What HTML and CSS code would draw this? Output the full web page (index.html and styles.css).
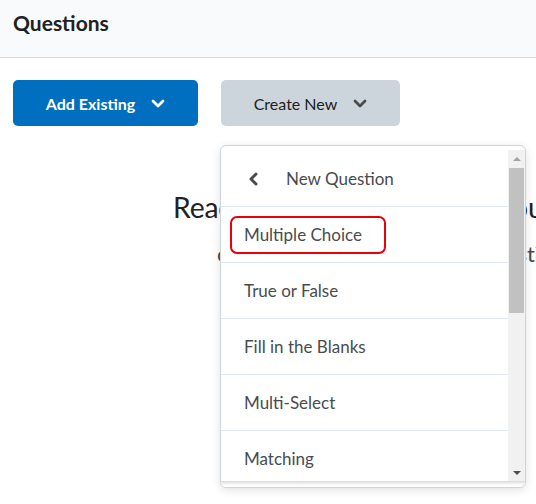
FILE: index.html
```html
<!DOCTYPE html>
<html>
<head>
<meta charset="utf-8">
<link rel="stylesheet" href="styles.css">
</head>
<body>
<header class="page-header">
  <h1 class="page-title">Questions</h1>
</header>
<div class="toolbar">
  <button class="btn btn-primary">
    <span>Add Existing</span>
    <svg class="chev-down" width="14" height="9" viewBox="0 0 14 9"><polyline points="2,2 7,7 12,2" fill="none" stroke="#fff" stroke-width="2.8" stroke-linecap="round" stroke-linejoin="round"/></svg>
  </button>
  <button class="btn btn-secondary">
    <span>Create New</span>
    <svg class="chev-down" width="14" height="9" viewBox="0 0 14 9"><polyline points="2,2 7,7 12,2" fill="none" stroke="#494c4e" stroke-width="2.8" stroke-linecap="round" stroke-linejoin="round"/></svg>
  </button>
</div>
<main class="empty-state">
  <h2 class="empty-title">Ready to add questions to your quiz?</h2>
  <p class="empty-text">create new questions or add existing ones to get started</p>
</main>

<div class="menu">
  <div class="menu-body">
    <div class="menu-list">
      <div class="menu-head">
        <svg class="chev-left" width="10" height="14" viewBox="0 0 10 14"><polyline points="8,2 3,7 8,12" fill="none" stroke="#494c4e" stroke-width="3" stroke-linecap="round" stroke-linejoin="round"/></svg>
        <span class="menu-head-label">New Question</span>
      </div>
      <div class="menu-item">
        <span>Multiple Choice</span>
        <span class="highlight"></span>
      </div>
      <div class="menu-item"><span>True or False</span></div>
      <div class="menu-item"><span>Fill in the Blanks</span></div>
      <div class="menu-item"><span>Multi-Select</span></div>
      <div class="menu-item"><span>Matching</span></div>
      <div class="menu-item"><span>Ordering</span></div>
    </div>
    <div class="scrollbar">
      <div class="sb-arrow sb-up"></div>
      <div class="sb-track"><div class="sb-thumb"></div></div>
      <div class="sb-arrow sb-down"></div>
    </div>
  </div>
  <div class="menu-foot"></div>
</div>
</body>
</html>
```
FILE: styles.css
```css
html, body {
  margin: 0;
  padding: 0;
  background: #fff;
}
body {
  font-family: Lato, "Noto Sans", sans-serif;
  color: #494c4e;
  width: 536px;
  height: 504px;
  overflow: hidden;
  position: relative;
}
.page-header {
  height: 57px;
  background: #f9fafc;
  border-bottom: 1px solid #d6dbe3;
  display: flex;
  align-items: flex-start;
}
.page-title {
  margin: 9px 0 0 13px;
  font-size: 21px;
  line-height: 28px;
  font-weight: 700;
  color: #202122;
}
.toolbar {
  display: flex;
  gap: 23px;
  padding: 22px 13px 0 13px;
}
.btn {
  height: 46px;
  border: none;
  border-radius: 5px;
  display: flex;
  align-items: center;
  justify-content: center;
  gap: 16px;
  font-family: Lato, "Noto Sans", sans-serif;
  font-size: 16px;
  padding: 0;
  cursor: pointer;
}
.btn-primary {
  width: 185px;
  background: #006fbf;
  color: #fff;
  font-weight: 700;
}
.btn-secondary {
  width: 179px;
  background: #cdd5dc;
  color: #202122;
  font-weight: 400;
}
.chev-down {
  display: block;
  margin-top: 1px;
}
.empty-state {
  padding: 0 0 0 173px;
  margin-top: 63px;
}
.empty-title {
  margin: 0;
  font-size: 28.3px;
  letter-spacing: -0.15px;
  line-height: 36px;
  font-weight: 400;
  color: #202122;
  white-space: nowrap;
}
.empty-text {
  margin: 15px 0 0 44px;
  font-size: 22px;
  letter-spacing: -0.15px;
  line-height: 28px;
  color: #494c4e;
  white-space: nowrap;
}

/* dropdown menu overlay */
.menu {
  position: absolute;
  left: 220px;
  top: 145px;
  width: 304px;
  background: #fff;
  border: 1px solid #cdd5dc;
  border-radius: 6px;
  box-shadow: 0 2px 10px rgba(0, 0, 0, 0.12);
  padding-top: 4px;
  overflow: hidden;
}
.menu-body {
  display: flex;
  height: 331px;
}
.menu-list {
  flex: 1;
  overflow: hidden;
}
.menu-head {
  height: 56px;
  border-bottom: 1px solid #e3e9f1;
  display: flex;
  align-items: center;
  padding-left: 27px;
}
.chev-left {
  display: block;
  margin-top: 1px;
}
.menu-head-label {
  margin-left: 28px;
  font-size: 17px;
}
.menu-item {
  position: relative;
  height: 55px;
  border-bottom: 1px solid #e3e9f1;
  display: flex;
  align-items: center;
  padding-left: 23px;
  font-size: 17px;
}
.highlight {
  position: absolute;
  left: 9px;
  top: 9px;
  width: 152px;
  height: 34px;
  border: 2px solid #e8000b;
  border-radius: 7px;
}
.scrollbar {
  width: 17px;
  background: #f1f1f1;
  display: flex;
  flex-direction: column;
}
.sb-arrow {
  height: 17px;
  display: flex;
  align-items: center;
  justify-content: center;
}
.sb-up::before {
  content: "";
  border-left: 4px solid transparent;
  border-right: 4px solid transparent;
  border-bottom: 4px solid #a3a3a3;
}
.sb-down::before {
  content: "";
  border-left: 4px solid transparent;
  border-right: 4px solid transparent;
  border-top: 4px solid #505050;
}
.sb-track {
  flex: 1;
  position: relative;
}
.sb-thumb {
  margin: 1px 1px 0 1px;
  height: 145px;
  background: #c1c1c1;
}
.menu-foot {
  height: 6px;
  background: linear-gradient(#d9d9d9, #f4f4f4 3px, #fff 5px);
}
```
